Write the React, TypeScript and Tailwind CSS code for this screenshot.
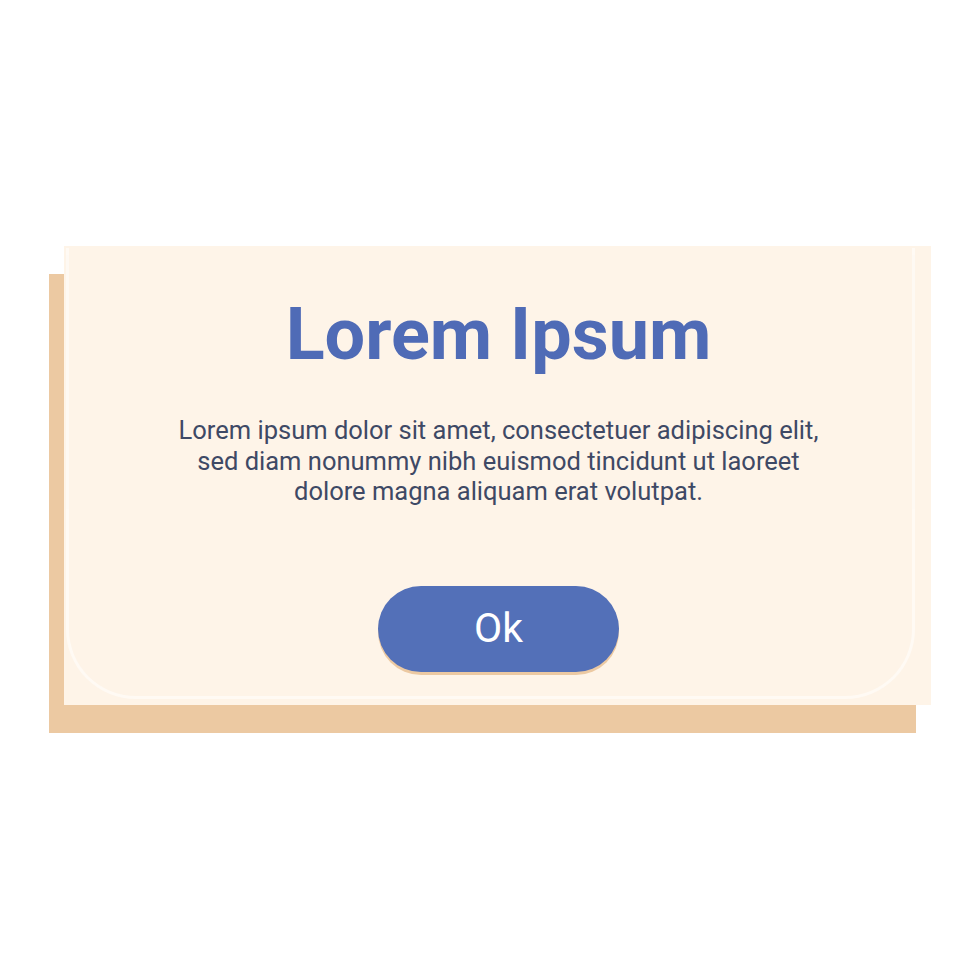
export default function App() {
  return (
    <div className="w-[980px] h-[980px] bg-white pt-[246px] pl-[64px] font-['Roboto',sans-serif]">
      <div className="w-[867px] h-[459px] bg-[#fef4e8] shadow-[-15px_28px_0_0_#ecc9a2] p-[2px] pr-[16px] pb-[6px]">
        <div className="h-full rounded-b-[70px] border-x-[3px] border-b-[3px] border-white/50 flex flex-col items-center pt-[51px] pl-[16px]">
          <h1 className="text-[72px] leading-none font-bold text-[#4f6bb6]">Lorem Ipsum</h1>
          <p className="mt-[44px] text-[25.5px] leading-[30.5px] text-[#3e4965] text-center">
            Lorem ipsum dolor sit amet, consectetuer adipiscing elit,
            <br />
            sed diam nonummy nibh euismod tincidunt ut laoreet
            <br />
            dolore magna aliquam erat volutpat.
          </p>
          <button className="mt-[79px] w-[241px] h-[86px] rounded-full bg-[#5370b8] shadow-[0_3px_0_0_#ecc9a2] text-white text-[41px] leading-none">
            Ok
          </button>
        </div>
      </div>
    </div>
  );
}
